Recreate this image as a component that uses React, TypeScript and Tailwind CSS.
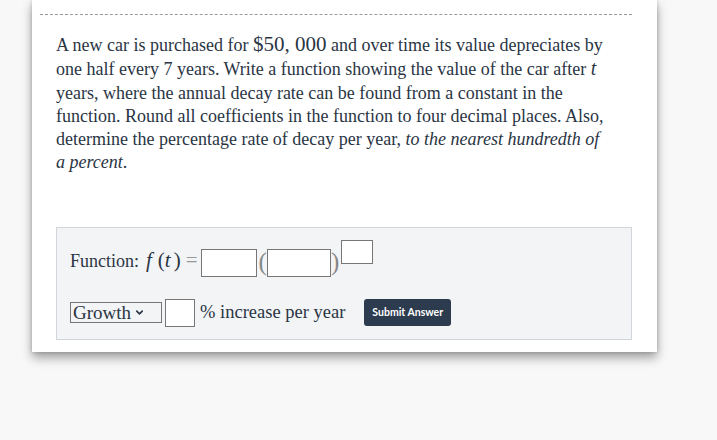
import { ChevronDown } from "lucide-react";

const serif = "font-['Liberation_Serif',serif]";
const math = "font-['Liberation_Serif',serif]";

const Box = ({ w, h }: { w: string; h: string }) => (
  <div className={`${w} ${h} bg-white border border-[#767676]`} />
);

export default function App() {
  return (
    <div className="h-[440px] w-[717px] bg-[#f8f8f8] overflow-hidden">
      <div className="pl-[32px]">
        <div className="w-[625px] bg-white pt-[14px] pb-[12px] shadow-[0_6px_10px_rgba(0,0,0,0.35),0_0_4px_rgba(0,0,0,0.2)]">
          <div className="ml-[8px] mr-[25px] border-t border-dashed border-[#9a9a9a]" />
          <div className="pl-[24px] pr-[25px]">
            <p className={`${serif} mt-[18px] text-[18px] leading-[23.3px] text-[#2a3544] whitespace-nowrap`}>
              A new car is purchased for <span className={`${math} text-[21px]`}>$50,&nbsp;000</span> and over time its value depreciates by
              <br />
              one half every 7 years. Write a function showing the value of the car after <span className={`${math} italic text-[20px]`}>t</span>
              <br />
              years, where the annual decay rate can be found from a constant in the
              <br />
              function. Round all coefficients in the function to four decimal places. Also,
              <br />
              determine the percentage rate of decay per year, <i>to the nearest hundredth of</i>
              <br />
              <i>a percent</i>.
            </p>

            <div className="mt-[52px] h-[113px] bg-[#f3f4f6] border border-[#d1d5db] pl-[13px] pt-[12px]">
              <div className={`flex items-end h-[37px] ${serif} text-[18px] text-[#2a3544]`}>
                <span className="mb-[2px]">Function:</span>
                <span className={`${math} text-[21px] ml-[7px]`}>
                  <i>f</i>
                  <span className="ml-[6px]">(</span>
                  <i>t</i>
                  <span className="ml-[3px]">)</span>
                </span>
                <span className={`${math} text-[21px] text-[#999] ml-[5px] mr-[3px]`}>=</span>
                <div>
                  <Box w="w-[56px]" h="h-[28px]" />
                </div>
                <span className={`${math} text-[25px] leading-[30px] text-[#888] ml-[2px]`}>(</span>
                <div>
                  <Box w="w-[64px]" h="h-[28px]" />
                </div>
                <span className={`${math} text-[25px] leading-[30px] text-[#888]`}>)</span>
                <div className="self-start ml-[2px]">
                  <Box w="w-[32px]" h="h-[24px]" />
                </div>
              </div>

              <div className={`flex items-center mt-[22px] ${serif} text-[18px] text-[#2a3544]`}>
                <div className="flex items-center h-[21px] w-[92px] border border-[#767676] pl-[2px] bg-[#f3f4f6]">
                  <span className={`${math} text-[19px] leading-none`}>Growth</span>
                  <ChevronDown className="ml-[3px] w-[11px] h-[11px]" strokeWidth={3.5} />
                </div>
                <div className="ml-[3px]">
                  <Box w="w-[30px]" h="h-[28px]" />
                </div>
                <span className={`${math} text-[18.5px] ml-[5px]`}>% increase per year</span>
                <button className="ml-[19px] h-[27px] px-[8px] rounded-[3px] bg-[#2d3b4f] text-white text-[10.5px] font-bold font-['Lato','Open_Sans',sans-serif]">
                  Submit Answer
                </button>
              </div>
            </div>
          </div>
        </div>
      </div>
    </div>
  );
}
